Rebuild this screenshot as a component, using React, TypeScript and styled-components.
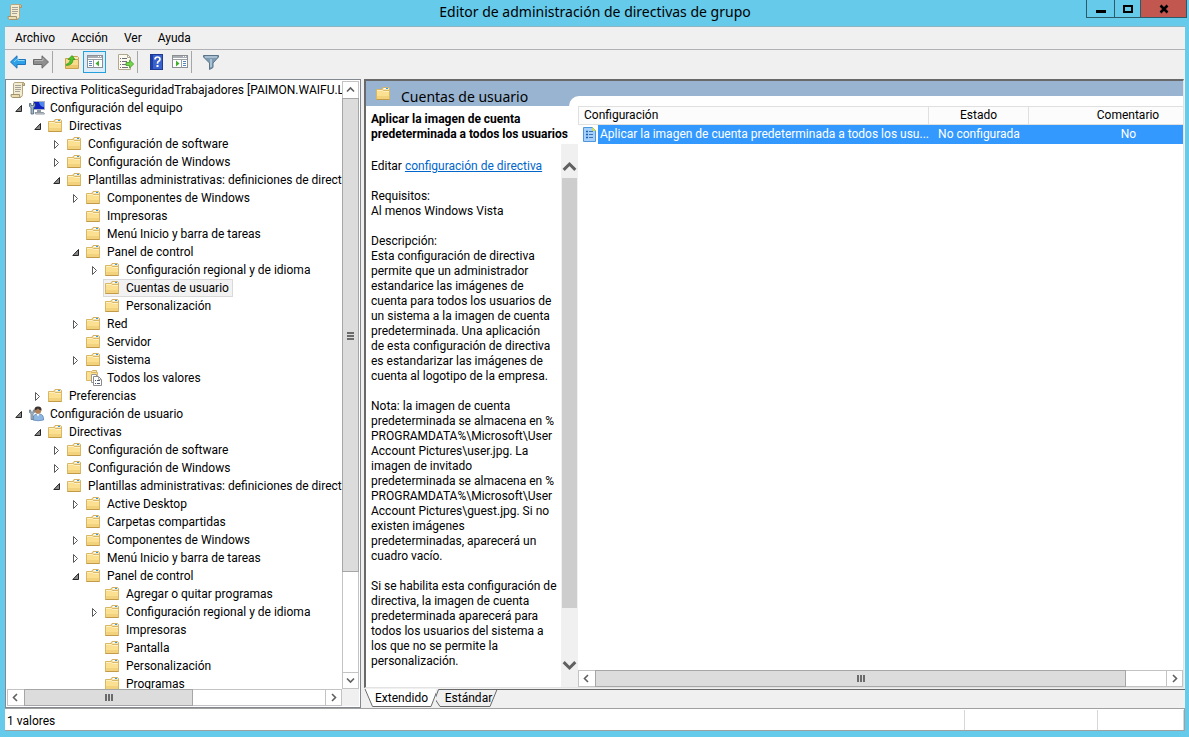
import React from 'react';
import styled, { createGlobalStyle, css } from 'styled-components';

const FONT = 'Roboto, "Liberation Sans", sans-serif';
const HEADING_FONT = '"Noto Sans", "Open Sans", sans-serif';

const GlobalStyle = createGlobalStyle`
  * { box-sizing: border-box; }
  body { margin: 0; background: #66caea; font: 12px/15px ${FONT}; color: #000; }
  button { font: inherit; color: inherit; border: 0; background: none; padding: 0; margin: 0; }
`;

/* ---------- window frame ---------- */

const Window = styled.div`
  height: 100vh;
  display: flex;
  flex-direction: column;
  background: #66caea;
  padding: 0 4px 6px 5px;
  overflow: hidden;
`;

const TitleBar = styled.header`
  flex: none;
  height: 27px;
  display: grid;
  grid-template-columns: 103px 1fr 103px;
  border-bottom: 1px solid #8fb4c2;
`;

const AppIcon = styled.span`
  padding: 4px 0 0 2px;
`;

const WindowTitle = styled.h1`
  margin: 0;
  font-family: ${HEADING_FONT};
  font-size: 14px;
  line-height: 24px;
  font-weight: 400;
  text-align: center;
  white-space: nowrap;
`;

const WindowButtons = styled.div`
  display: flex;
  justify-content: flex-end;
  margin-right: -2px;
`;

const WindowButton = styled.button<{ $wide?: boolean }>`
  width: ${p => (p.$wide ? 47 : 27)}px;
  height: 18px;
  border: 1px solid #2c5a69;
  border-top: 0;
  margin-left: -1px;
  padding-bottom: 2px;
  background: ${p => (p.$wide ? '#c1574f' : 'transparent')};
  display: flex;
  align-items: center;
  justify-content: center;
  &:first-child { width: 29px; }
`;

const Client = styled.div`
  flex: 1;
  min-height: 0;
  display: flex;
  flex-direction: column;
  background: #f0f0f0;
`;

const MenuBar = styled.nav`
  flex: none;
  height: 23px;
  display: flex;
  gap: 16px;
  padding: 0 10px;
  border-bottom: 1px solid #b1b1b5;
`;

const MenuItem = styled.button`
  line-height: 21px;
`;

const Toolbar = styled.div`
  flex: none;
  height: 29px;
  display: flex;
  align-items: center;
  padding: 0 1px 5px;
`;

const ToolButton = styled.button<{ $active?: boolean }>`
  width: 23px;
  height: 22px;
  display: flex;
  align-items: center;
  justify-content: center;
  ${p => p.$active && css`
    background: #dcecf8;
    border: 1px solid #26a0da;
  `}
`;

const ToolGap = styled.span<{ $line?: boolean }>`
  width: 8px;
  height: 22px;
  border-left: 1px solid ${p => (p.$line ? '#a6a6a6' : 'transparent')};
`;

const Workspace = styled.div`
  flex: 1;
  min-height: 0;
  display: flex;
  gap: 3px;
`;

/* ---------- scroll bars ---------- */

const Bar = styled.div<{ $vertical?: boolean }>`
  flex: none;
  display: flex;
  flex-direction: ${p => (p.$vertical ? 'column' : 'row')};
  ${p => (p.$vertical ? 'width: 17px;' : 'height: 17px;')}
  background: #fff;
  border: 1px solid #c3c3c3;
`;

const BarButton = styled.button`
  flex: none;
  min-width: 15px;
  min-height: 15px;
  display: flex;
  align-items: center;
  justify-content: center;
`;

const Thumb = styled.div<{ $size: number; $vertical?: boolean }>`
  flex: ${p => p.$size} 1 0;
  background: #dcdcdc;
  border: 1px solid #a6a6a6;
  margin: ${p => (p.$vertical ? '1px -1px 0' : '-1px 0 -1px 1px')};
  display: flex;
  align-items: center;
  justify-content: center;
`;

const Track = styled.div<{ $size: number; $vertical?: boolean }>`
  flex: ${p => p.$size} 1 0;
  ${p => (p.$vertical ? 'border-bottom' : 'border-right')}: 1px solid #c3c3c3;
`;

const chevrons = {
  up: 'M1 6.500 L4.500 3 L8 6.500',
  down: 'M1 2.500 L4.500 6 L8 2.500',
  left: 'M6 1 L2.500 4.500 L6 8',
  right: 'M3 1 L6.500 4.500 L3 8',
};

const Chevron = ({ dir, size = 9, width = 1.6 }: { dir: keyof typeof chevrons; size?: number; width?: number }) => (
  <svg width={size} height={size} viewBox="0 0 9 9">
    <path d={chevrons[dir]} fill="none" stroke="#606060" strokeWidth={width} />
  </svg>
);

const Grip = ({ vertical }: { vertical?: boolean }) => (
  <svg width="9" height="9" viewBox="0 0 9 9" shapeRendering="crispEdges">
    <path
      d={vertical ? 'M1 1h7v2h-7zM1 4h7v2h-7zM1 7h7v2h-7z' : 'M1 1h2v7h-2zM4 1h2v7h-2zM7 1h2v7h-2z'}
      fill="#6b6b6b"
    />
  </svg>
);

function ScrollBar({ vertical, thumb, rest }: { vertical?: boolean; thumb: number; rest: number }) {
  return (
    <Bar $vertical={vertical}>
      <BarButton aria-label={vertical ? 'Subir' : 'Izquierda'}>
        <Chevron dir={vertical ? 'up' : 'left'} />
      </BarButton>
      <Thumb $size={thumb} $vertical={vertical}><Grip vertical={vertical} /></Thumb>
      <Track $size={rest} $vertical={vertical} />
      <BarButton aria-label={vertical ? 'Bajar' : 'Derecha'}>
        <Chevron dir={vertical ? 'down' : 'right'} />
      </BarButton>
    </Bar>
  );
}

/* ---------- icons ---------- */

const Svg = styled.svg`
  display: block;
  flex: none;
`;

const FolderIcon = () => (
  <Svg width="16" height="16" viewBox="0 0 16 16">
    <path d="M5.500 5V3.500L7 1.500H12.500L13.500 2.500V5Z" fill="#f7e6b4" stroke="#d3b063" />
    <rect x="8" y="2" width="4" height="1" fill="#fff" />
    <rect x="10" y="2" width="2" height="1" fill="#3d9be0" />
    <path d="M0.500 3.500H6L7.500 4.500H13.500V13.500H0.500Z" fill="#fbe092" stroke="#d9b765" />
    <path d="M1 4.500H6.500L7.500 5.500H13" fill="none" stroke="#fdf0c4" />
    <rect x="1" y="10" width="12" height="3" fill="#f3d27e" />
    <path d="M0.500 13.500H13.500" stroke="#c29a48" />
  </Svg>
);

const AllSettingsIcon = () => (
  <Svg width="16" height="16" viewBox="0 0 16 16">
    <path d="M5.500 3.500V1.500L6.500 0.500H10.500V3.500" fill="#f7e6b4" stroke="#d3b063" />
    <path d="M0.500 1.500H4.500L6 2.500H11.500V10.500H0.500Z" fill="#fbe092" stroke="#d9b765" />
    <path d="M5.500 4.500H10.500V12.500H5.500Z" fill="#fff" stroke="#9a9a9a" />
    <path d="M7.500 6.500H12.500L15.500 9.500V15.500H7.500Z" fill="#fff" stroke="#8a8a8a" />
    <path d="M12.500 6.500V9.500H15.500" fill="none" stroke="#aaa" />
    <path d="M9 10.500h1M11 10.500h3M9 13.500h1M11 13.500h3" stroke="#4c5a72" />
  </Svg>
);

const ScrollIcon = () => (
  <Svg width="16" height="16" viewBox="0 0 16 16">
    <path d="M3.500 1.500Q4 0.500 5 0.500H13.500Q15 1 14.500 3.500H12.500V12.500Q12.500 15 10.500 15H3.500V3Z" fill="#f4ecd2" stroke="#b6a67c" />
    <path d="M12.500 3.500H14.500Q15 1 13.500 0.500Q12.500 1 12.500 3.500Z" fill="#d9cba0" stroke="#a3946b" />
    <path d="M1 12.500H9.500Q9 14.500 10.500 15.500H2.500Q0.500 15 1 12.500Z" fill="#e9dcb4" stroke="#a3946b" />
    <path d="M5 3.500h6M5 5.500h6M5 7.500h6M5 9.500h5" stroke="#a3a398" />
  </Svg>
);

const ComputerIcon = () => (
  <Svg width="16" height="16" viewBox="0 0 16 16">
    <rect x="4.500" y="1.500" width="11" height="8" fill="#0f22c0" stroke="#a9b3bf" />
    <path d="M10 2h5v5q-4 0-5-5z" fill="#4f86ee" />
    <path d="M8 10h4v2h-4z" fill="#8f99a5" />
    <path d="M6 12.500h8.500l1 1.500h-9z" fill="#d6dade" stroke="#8f979f" />
    <path d="M0.500 3.500v3l1.500 1v6.500h2.500v-6.500l1.500-1v-3h-1.500v2h-2.500v-2z" fill="#9fb8cc" stroke="#4d6275" strokeWidth="0.800" />
  </Svg>
);

const UserIcon = () => (
  <Svg width="16" height="16" viewBox="0 0 16 16">
    <path d="M4 14Q3.500 8.500 8 8H11Q15 9 14.500 14Q9 15.500 4 14Z" fill="#8db6e2" stroke="#5c86b8" strokeWidth="0.800" />
    <circle cx="9" cy="4.500" r="3.200" fill="#b07f58" />
    <path d="M5.500 4.500Q5 0.500 9 0.500Q13 0.500 12.500 4.500Q10 4 9 2.500Q7.500 4 5.500 4.500Z" fill="#3b3230" />
    <path d="M7.500 8L9 10.500L10.500 8Z" fill="#fff" />
    <path d="M0.500 4v2.500l1.500 1V13.500h2V7.500l1.500-1V4H4.300v2H1.700V4z" fill="#a9bccd" stroke="#5d7083" strokeWidth="0.700" />
  </Svg>
);

const SettingIcon = () => (
  <Svg width="14" height="16" viewBox="0 0 14 16">
    <path d="M0.500 1.500H9.500L12.500 4.500V15.500H0.500Z" fill="#a4d0fb" stroke="#4f97dd" />
    <path d="M9.500 1.500L12.500 4.500H9.500Z" fill="#e8f04a" stroke="#b9cf4a" strokeWidth="0.600" />
    <path d="M3 5.500h2M3 8.500h2M3 11.500h2" stroke="#1c5fae" strokeWidth="1.500" />
    <path d="M6 5.500h4M6 8.500h4M6 11.500h4" stroke="#3d74b0" />
  </Svg>
);

const ArrowIcon = ({ flip }: { flip?: boolean }) => (
  <Svg width="16" height="14" viewBox="0 0 16 14">
    <path
      d={flip ? 'M15.500 7L9 0.800V4.500H0.500V9.500H9V13.200Z' : 'M0.500 7L7 0.800V4.500H15.500V9.500H7V13.200Z'}
      fill={flip ? '#8f8f8f' : '#2ea0e8'}
      stroke={flip ? '#6a6a6a' : '#2273b8'}
    />
    <path d={flip ? 'M1.500 5.500H10V3.300' : 'M14.500 5.500H8V3.300L4 7'} fill="none" stroke={flip ? '#b9b9b9' : '#8fd6f7'} />
  </Svg>
);

const FolderUpIcon = () => (
  <Svg width="16" height="16" viewBox="0 0 16 16">
    <path d="M7 5V3.500L8 2.500H13.500L14.500 3.500V5" fill="#f7e6b4" stroke="#c9a24e" />
    <path d="M1.500 4.500H6L7.500 5.500H14.500V14.500H1.500Z" fill="#f8dc8c" stroke="#c9a24e" />
    <rect x="2" y="11" width="12" height="3" fill="#edc76c" />
    <path d="M2 10.500Q6 9.500 6.500 5.500H4L8 1.500L11 5.500H9Q9 11 2.500 11.500Z" fill="#4bc52c" stroke="#2f9418" strokeWidth="0.700" />
  </Svg>
);

const PaneIcon = ({ right }: { right?: boolean }) => (
  <Svg width="16" height="14" viewBox="0 0 16 14">
    <rect x="0.500" y="0.500" width="15" height="12" fill="#fff" stroke="#8b8f94" />
    <rect x="1" y="1" width="14" height="2" fill="#a8adb3" />
    <path d="M11 1.500h1M13 1.500h1" stroke="#fff" />
    <path d="M1 4.500H15" stroke="#9a9fa5" />
    <path d={right ? 'M9.500 5V13' : 'M6.500 5V13'} stroke="#9a9fa5" />
    <path d={right ? 'M11 6.500h3M11 8.500h3M11 10.500h3' : 'M2 6.500h3M2 8.500h3M2 10.500h3'} stroke="#5a87b8" />
    <path d={right ? 'M4 5.500L7.500 8.500L4 11.500Z' : 'M12 5.500L8.500 8.500L12 11.500Z'} fill="#3fae2a" />
  </Svg>
);

const ExportIcon = () => (
  <Svg width="16" height="16" viewBox="0 0 16 16">
    <path d="M0.500 0.500H9.500L12.500 3.500V15.500H0.500Z" fill="#fdfbf0" stroke="#b0a98f" />
    <path d="M9.500 0.500V3.500H12.500" fill="none" stroke="#b0a98f" />
    <path d="M2 4.500h1M4 4.500h5M2 7.500h1M4 7.500h5M2 10.500h1M4 10.500h4M2 13.500h1M4 13.500h6" stroke="#6f6f7d" />
    <path d="M8 8.500H11.500V6L15.700 10L11.500 14V11.500H8Z" fill="#74d44f" stroke="#3c9c22" strokeWidth="0.800" />
  </Svg>
);

const HelpIcon = () => (
  <Svg width="14" height="16" viewBox="0 0 14 16">
    <rect x="0.500" y="0.500" width="12" height="15" fill="#3a62cf" stroke="#1f3a8e" />
    <rect x="1" y="1" width="2" height="14" fill="#1f3fa5" />
    <path d="M5 5.500Q5 3 7.500 3Q10 3 10 5.300Q10 6.800 8.300 7.600Q7.500 8 7.500 9.800" fill="none" stroke="#fff" strokeWidth="1.700" />
    <rect x="6.500" y="11" width="2" height="2" fill="#fff" />
  </Svg>
);

const FunnelIcon = () => (
  <Svg width="16" height="15" viewBox="0 0 16 15">
    <path d="M0.500 0.500H15.500V2L10 8V12.500L6.500 14.500V8L0.500 2Z" fill="#7f9bb2" stroke="#5b7488" />
    <path d="M2 2H14" stroke="#d4e2ed" />
    <path d="M8 4V12" stroke="#c4d8e8" strokeWidth="1.300" />
  </Svg>
);

/* ---------- console tree ---------- */

const TreePane = styled.section`
  flex: 0 0 356px;
  border: 1px solid #828790;
  padding: 1px;
  background: #fff;
  display: grid;
  grid-template-columns: minmax(0, 1fr) 17px;
  grid-template-rows: minmax(0, 1fr) 17px;
`;

const TreeList = styled.ul`
  margin: 0;
  padding: 0;
  list-style: none;
  overflow: hidden;
`;

const TreeRow = styled.li<{ $level: number }>`
  height: 18px;
  display: flex;
  align-items: center;
  padding-left: ${p => (p.$level ? p.$level * 19 - 15 : 1)}px;
  white-space: nowrap;
`;

const Expander = styled.button`
  flex: none;
  width: 16px;
  height: 18px;
  display: flex;
  align-items: center;
  justify-content: center;
`;

const NodeLabel = styled.span<{ $selected?: boolean }>`
  height: 18px;
  display: flex;
  align-items: center;
  gap: 5px;
  padding: 0 3px 0 1px;
  line-height: 16px;
  border: 1px solid ${p => (p.$selected ? '#d9d9d9' : 'transparent')};
  background: ${p => (p.$selected ? '#f2f2f2' : 'transparent')};
`;

const Corner = styled.div`
  background: #f0f0f0;
`;

type NodeIcon = 'folder' | 'scroll' | 'computer' | 'user' | 'all';
type Node = [level: number, state: '' | 'open' | 'closed', label: string, icon?: NodeIcon];

const nodes: Node[] = [
  [0, '', 'Directiva PoliticaSeguridadTrabajadores [PAIMON.WAIFU.LOCAL]', 'scroll'],
  [1, 'open', 'Configuración del equipo', 'computer'],
  [2, 'open', 'Directivas'],
  [3, 'closed', 'Configuración de software'],
  [3, 'closed', 'Configuración de Windows'],
  [3, 'open', 'Plantillas administrativas: definiciones de directivas'],
  [4, 'closed', 'Componentes de Windows'],
  [4, '', 'Impresoras'],
  [4, '', 'Menú Inicio y barra de tareas'],
  [4, 'open', 'Panel de control'],
  [5, 'closed', 'Configuración regional y de idioma'],
  [5, '', 'Cuentas de usuario'],
  [5, '', 'Personalización'],
  [4, 'closed', 'Red'],
  [4, '', 'Servidor'],
  [4, 'closed', 'Sistema'],
  [4, '', 'Todos los valores', 'all'],
  [2, 'closed', 'Preferencias'],
  [1, 'open', 'Configuración de usuario', 'user'],
  [2, 'open', 'Directivas'],
  [3, 'closed', 'Configuración de software'],
  [3, 'closed', 'Configuración de Windows'],
  [3, 'open', 'Plantillas administrativas: definiciones de directivas'],
  [4, 'closed', 'Active Desktop'],
  [4, '', 'Carpetas compartidas'],
  [4, 'closed', 'Componentes de Windows'],
  [4, 'closed', 'Menú Inicio y barra de tareas'],
  [4, 'open', 'Panel de control'],
  [5, '', 'Agregar o quitar programas'],
  [5, 'closed', 'Configuración regional y de idioma'],
  [5, '', 'Impresoras'],
  [5, '', 'Pantalla'],
  [5, '', 'Personalización'],
  [5, '', 'Programas'],
];

const SELECTED = 11;

const nodeIcons: Record<NodeIcon, React.ComponentType> = {
  folder: FolderIcon,
  scroll: ScrollIcon,
  computer: ComputerIcon,
  user: UserIcon,
  all: AllSettingsIcon,
};

const Triangle = ({ open }: { open: boolean }) => (
  <svg width="8" height="10" viewBox="0 0 8 10">
    {open
      ? <path d="M6.500 2.500V8.500H0.800Z" fill="#8a8a8a" stroke="#262626" />
      : <path d="M1.500 1.500L5.500 5.500L1.500 9.500Z" fill="#fff" stroke="#5a5a5a" />}
  </svg>
);

function Tree() {
  return (
    <TreePane aria-label="Árbol de consola">
      <TreeList role="tree">
        {nodes.map(([level, state, label, icon = 'folder'], i) => {
          const Icon = nodeIcons[icon];
          return (
            <TreeRow key={i} $level={level} role="treeitem" aria-selected={i === SELECTED}>
              {level > 0 && (state
                ? <Expander aria-label={state === 'open' ? 'Contraer' : 'Expandir'}><Triangle open={state === 'open'} /></Expander>
                : <Expander as="span" />)}
              <NodeLabel $selected={i === SELECTED}><Icon />{label}</NodeLabel>
            </TreeRow>
          );
        })}
      </TreeList>
      <ScrollBar vertical thumb={474} rest={100} />
      <ScrollBar thumb={169} rest={133} />
      <Corner />
    </TreePane>
  );
}

/* ---------- result pane ---------- */

const ResultColumn = styled.section`
  flex: 1;
  min-width: 0;
  display: flex;
  flex-direction: column;
`;

const ResultPane = styled.div`
  flex: 1;
  min-height: 0;
  margin-right: 1px;
  display: flex;
  flex-direction: column;
  background: #fff;
  border: solid;
  border-width: 2px 1px 1px 2px;
  border-color: #696969 #e3e3e3 #e3e3e3 #696969;
`;

const Banner = styled.div`
  flex: none;
  height: 25px;
  display: flex;
  background: #99b4d1;
`;

const BannerTitle = styled.h2`
  flex: 0 0 203px;
  margin: 0;
  padding-left: 10px;
  display: flex;
  align-items: center;
  gap: 9px;
  font-family: ${HEADING_FONT};
  font-size: 14px;
  line-height: 25px;
  font-weight: 400;
`;

const BannerText = styled.span`
  padding-top: 6px;
`;

const BannerNotch = styled.span`
  flex: 1;
  align-self: flex-end;
  height: 10px;
  background: #fff;
  border-top-left-radius: 10px;
`;

const Split = styled.div`
  flex: 1;
  min-height: 0;
  display: flex;
`;

const Detail = styled.article`
  flex: 0 0 212px;
  min-width: 0;
  display: flex;
  flex-direction: column;
`;

const DetailTitle = styled.h3`
  flex: none;
  margin: 0;
  height: 38px;
  padding: 6px 0 0 5px;
  font-size: 12px;
  line-height: 15px;
  font-weight: 700;
  white-space: nowrap;
`;

const DetailBody = styled.div`
  flex: 1;
  min-height: 0;
  display: flex;
`;

const DetailText = styled.div`
  flex: 1;
  min-width: 0;
  overflow: hidden;
  padding: 15px 0 0 5px;
`;

const Paragraph = styled.p`
  margin: 0 0 15px;
  white-space: pre;
`;

const EditLink = styled.a`
  color: #0066cc;
  text-decoration: underline;
`;

const FlatBar = styled.div`
  flex: none;
  width: 17px;
  padding: 12px 1px 12px 0;
  background: #f0f0f0;
  display: flex;
  flex-direction: column;
`;

const FlatButton = styled.button`
  flex: none;
  height: 20px;
  display: flex;
  align-items: center;
  justify-content: center;
`;

const FlatThumb = styled.div`
  flex: 430 1 0;
  margin: 2px 0 0 1px;
  background: #cdcdcd;
`;

const FlatRest = styled.div`
  flex: 47 1 0;
`;

const ListArea = styled.div`
  flex: 1;
  min-width: 0;
  display: flex;
  flex-direction: column;
`;

const TableClip = styled.div`
  flex: 1;
  min-height: 0;
  overflow: hidden;
`;

const Table = styled.table`
  width: 100%;
  min-width: 650px;
  table-layout: fixed;
  border-collapse: separate;
  border-spacing: 0;
`;

const HeadCell = styled.th<{ $width?: number; $start?: boolean }>`
  width: ${p => (p.$width ? `${p.$width}px` : 'auto')};
  height: 19px;
  padding: 0 0 0 ${p => (p.$start ? 5 : 0)}px;
  font-weight: 400;
  line-height: 17px;
  text-align: ${p => (p.$start ? 'left' : 'center')};
  background: #fcfcfc;
  border: 1px solid #e0e0e0;
  border-left-width: ${p => (p.$start ? 1 : 0)}px;
`;

const Cell = styled.td`
  height: 19px;
  padding: 0;
  line-height: 19px;
  text-align: center;
  color: #fff;
  background: #3399ff;
`;

const SettingName = styled.div`
  display: flex;
  align-items: center;
  text-align: left;
`;

const IconSlot = styled.span`
  flex: 0 0 20px;
  height: 19px;
  padding: 1px 0 0 5px;
  background: #fff;
`;

const SettingText = styled.span`
  flex: 1;
  min-width: 0;
  padding: 0 2px;
  overflow: hidden;
  white-space: nowrap;
`;

/* ---------- view tabs ---------- */

const TabStrip = styled.div`
  flex: none;
  height: 19px;
  margin-top: 1px;
  display: flex;
  background: #f0f0f0;
`;

const TabFill = styled.span`
  flex: 1;
  border-top: 1px solid #696969;
`;

const TabButton = styled.button<{ $width: number }>`
  flex: none;
  width: ${p => p.$width}px;
  height: 19px;
  line-height: 19px;
  display: grid;
  > * { grid-area: 1 / 1; }
`;

const TabText = styled.span`
  text-align: center;
  padding-left: 3px;
`;

function ViewTabs() {
  return (
    <TabStrip role="tablist">
      <TabButton role="tab" aria-selected="true" $width={72}>
        <Svg width="72" height="19" viewBox="0 0 72 19">
          <path d="M0 0H73L67 18H8.500Z" fill="#fff" />
          <path d="M1 0L8.500 17.500H67L73 2" fill="none" stroke="#696969" />
        </Svg>
        <TabText>Extendido</TabText>
      </TabButton>
      <TabButton role="tab" aria-selected="false" $width={62}>
        <Svg width="62" height="19" viewBox="0 0 62 19">
          <path d="M62 0.500H2.500L-1 10L4 17.500H54L61 0.500" fill="#f0f0f0" stroke="#696969" />
        </Svg>
        <TabText>Estándar</TabText>
      </TabButton>
      <TabFill />
    </TabStrip>
  );
}

/* ---------- status bar ---------- */

const StatusBar = styled.footer`
  flex: none;
  height: 23px;
  display: flex;
  background: #fff;
  border: solid #a0a0a0;
  border-width: 1px 1px 1px 0;
  line-height: 22px;
`;

const StatusCell = styled.span<{ $width?: number }>`
  flex: ${p => (p.$width ? `0 0 ${p.$width}px` : '1')};
  margin-top: 1px;
  padding-left: 2px;
  border-right: 1px solid #d7d7d7;
`;

const description = [
  'Requisitos:\nAl menos Windows Vista',
  'Descripción:\nEsta configuración de directiva\npermite que un administrador\nestandarice las imágenes de\ncuenta para todos los usuarios de\nun sistema a la imagen de cuenta\npredeterminada. Una aplicación\nde esta configuración de directiva\nes estandarizar las imágenes de\ncuenta al logotipo de la empresa.',
  'Nota: la imagen de cuenta\npredeterminada se almacena en %\nPROGRAMDATA%\\Microsoft\\User\nAccount Pictures\\user.jpg. La\nimagen de invitado\npredeterminada se almacena en %\nPROGRAMDATA%\\Microsoft\\User\nAccount Pictures\\guest.jpg. Si no\nexisten imágenes\npredeterminadas, aparecerá un\ncuadro vacío.',
  'Si se habilita esta configuración de\ndirectiva, la imagen de cuenta\npredeterminada aparecerá para\ntodos los usuarios del sistema a\nlos que no se permite la\npersonalización.',
];

export default function App() {
  return (
    <Window>
      <GlobalStyle />
      <TitleBar>
        <AppIcon><ScrollIcon /></AppIcon>
        <WindowTitle>Editor de administración de directivas de grupo</WindowTitle>
        <WindowButtons>
          <WindowButton aria-label="Minimizar">
            <svg width="10" height="12"><rect y="8" width="10" height="3" /></svg>
          </WindowButton>
          <WindowButton aria-label="Maximizar">
            <svg width="10" height="12"><rect x="1" y="4" width="8" height="6" fill="none" stroke="#000" strokeWidth="2" /></svg>
          </WindowButton>
          <WindowButton aria-label="Cerrar" $wide>
            <svg width="10" height="12"><path d="M1.500 3.500L8.500 10.500M8.500 3.500L1.500 10.500" stroke="#000" strokeWidth="2.600" /></svg>
          </WindowButton>
        </WindowButtons>
      </TitleBar>
      <Client>
        <MenuBar>
          <MenuItem>Archivo</MenuItem>
          <MenuItem>Acción</MenuItem>
          <MenuItem>Ver</MenuItem>
          <MenuItem>Ayuda</MenuItem>
        </MenuBar>
        <Toolbar role="toolbar">
          <ToolButton aria-label="Atrás"><ArrowIcon /></ToolButton>
          <ToolButton aria-label="Adelante"><ArrowIcon flip /></ToolButton>
          <ToolGap $line />
          <ToolButton aria-label="Subir un nivel"><FolderUpIcon /></ToolButton>
          <ToolButton aria-label="Mostrar árbol" $active><PaneIcon /></ToolButton>
          <ToolGap />
          <ToolButton aria-label="Exportar lista"><ExportIcon /></ToolButton>
          <ToolGap $line />
          <ToolButton aria-label="Ayuda"><HelpIcon /></ToolButton>
          <ToolButton aria-label="Mostrar panel de acciones"><PaneIcon right /></ToolButton>
          <ToolGap $line />
          <ToolButton aria-label="Filtro"><FunnelIcon /></ToolButton>
        </Toolbar>
        <Workspace>
          <Tree />
          <ResultColumn>
            <ResultPane>
              <Banner>
                <BannerTitle><FolderIcon /><BannerText>Cuentas de usuario</BannerText></BannerTitle>
                <BannerNotch />
              </Banner>
              <Split>
                <Detail>
                  <DetailTitle>Aplicar la imagen de cuenta<br />predeterminada a todos los usuarios</DetailTitle>
                  <DetailBody>
                    <DetailText>
                      <Paragraph>Editar <EditLink href="#editar">configuración de directiva</EditLink></Paragraph>
                      {description.map(text => <Paragraph key={text}>{text}</Paragraph>)}
                    </DetailText>
                    <FlatBar>
                      <FlatButton aria-label="Subir"><Chevron dir="up" size={15} width={1.8} /></FlatButton>
                      <FlatThumb />
                      <FlatRest />
                      <FlatButton aria-label="Bajar"><Chevron dir="down" size={15} width={1.8} /></FlatButton>
                    </FlatBar>
                  </DetailBody>
                </Detail>
                <ListArea>
                  <TableClip>
                    <Table>
                      <thead>
                        <tr>
                          <HeadCell $width={351} $start>Configuración</HeadCell>
                          <HeadCell $width={100}>Estado</HeadCell>
                          <HeadCell>Comentario</HeadCell>
                        </tr>
                      </thead>
                      <tbody>
                        <tr>
                          <Cell>
                            <SettingName>
                              <IconSlot><SettingIcon /></IconSlot>
                              <SettingText>Aplicar la imagen de cuenta predeterminada a todos los usu...</SettingText>
                            </SettingName>
                          </Cell>
                          <Cell>No configurada</Cell>
                          <Cell>No</Cell>
                        </tr>
                      </tbody>
                    </Table>
                  </TableClip>
                  <ScrollBar thumb={531} rest={40} />
                </ListArea>
              </Split>
            </ResultPane>
            <ViewTabs />
          </ResultColumn>
        </Workspace>
        <StatusBar>
          <StatusCell>1 valores</StatusCell>
          <StatusCell $width={133} />
          <StatusCell $width={86} />
        </StatusBar>
      </Client>
    </Window>
  );
}
